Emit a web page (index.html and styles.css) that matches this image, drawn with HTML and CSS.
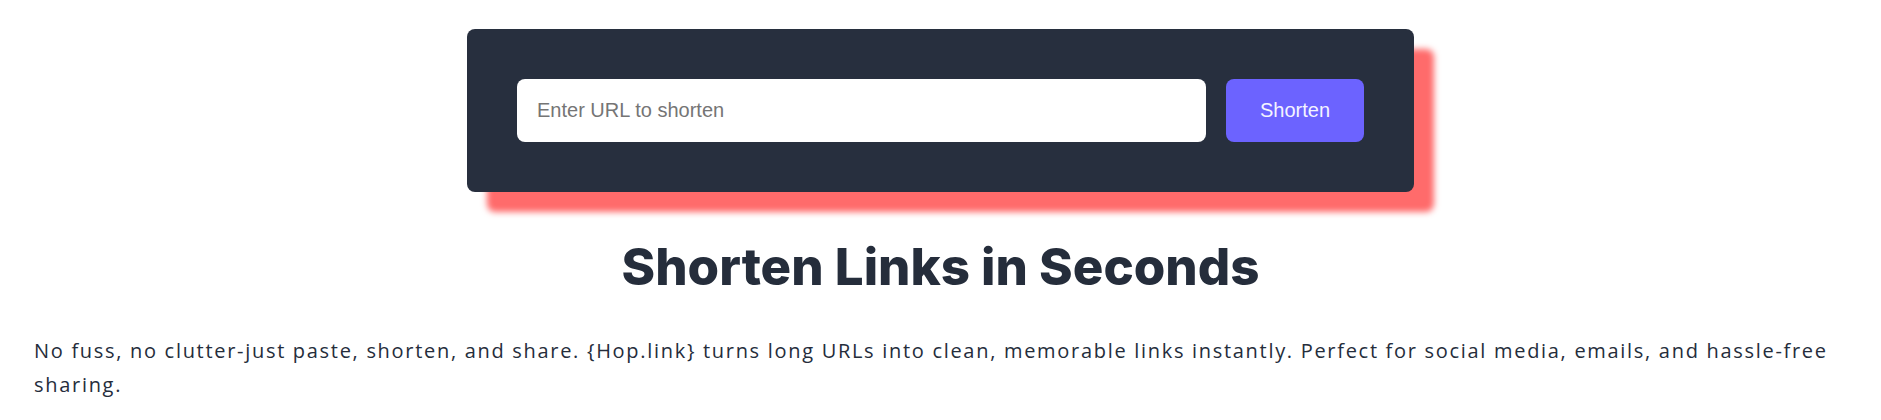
FILE: index.html
```html
<!DOCTYPE html>
<html lang="en">
<head>
<meta charset="utf-8">
<title>Hop.link</title>
<link rel="stylesheet" href="styles.css">
</head>
<body>
<main class="page">
  <section class="card">
    <form class="shorten-form">
      <input class="url-input" type="text" placeholder="Enter URL to shorten">
      <button class="shorten-btn" type="button">Shorten</button>
    </form>
  </section>
  <h1 class="title">Shorten Links in Seconds</h1>
  <p class="lead">No fuss, no clutter-just paste, shorten, and share. {Hop.link} turns long URLs into clean, memorable links instantly. Perfect for social media, emails, and hassle-free sharing.</p>
</main>
</body>
</html>
```

FILE: styles.css
```css
* { box-sizing: border-box; }
html, body { margin: 0; padding: 0; background: #ffffff; }
.page {
  display: flex;
  flex-direction: column;
  align-items: center;
  padding: 29px 34px 0;
}
.card {
  width: 947px;
  background: #272f3e;
  border-radius: 8px;
  padding: 50px;
  box-shadow: 20px 20px 6px #ff6b6b;
}
.shorten-form {
  display: flex;
  gap: 20px;
}
.url-input {
  flex: 1;
  height: 63px;
  border: none;
  border-radius: 8px;
  padding: 0 20px;
  font-family: "Liberation Sans", Arial, sans-serif;
  font-size: 20px;
  color: #333;
  background: #fff;
  outline: none;
}
.url-input::placeholder { color: #757575; }
.shorten-btn {
  width: 138px;
  height: 63px;
  border: none;
  border-radius: 8px;
  background: #6c63ff;
  color: #f4f4ff;
  font-family: "Liberation Sans", Arial, sans-serif;
  font-size: 20px;
}
.title {
  margin: 45px 0 0;
  font-family: Inter, "Noto Sans", sans-serif;
  font-weight: 800;
  font-size: 51px;
  line-height: 60px;
  color: #252d3b;
  text-align: center;
}
.lead {
  align-self: stretch;
  margin: 37px 0 0;
  font-family: "Open Sans", "Noto Sans", sans-serif;
  font-size: 20px;
  line-height: 34px;
  letter-spacing: 1.7px;
  color: #252d3b;
}
```
